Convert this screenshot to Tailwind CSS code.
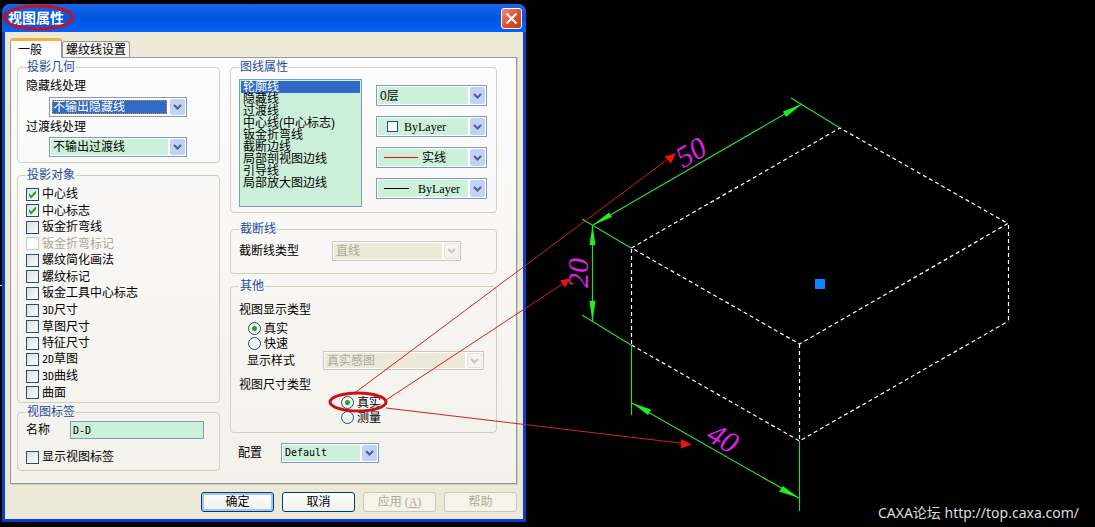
<!DOCTYPE html>
<html lang="zh-CN">
<head>
    <meta charset="UTF-8" />
    <meta name="viewport" content="width=device-width, initial-scale=1.0"/>
    <title>视图属性</title>
    <script src="https://cdn.jsdelivr.net/npm/@tailwindcss/browser@4"></script>
</head>
<body class="relative min-h-screen overflow-hidden bg-black pt-1 pl-[2px] font-['Liberation_Sans','Noto_Sans_CJK_SC',sans-serif] text-[12px] leading-4 text-black">

    <!-- Dialog -->
    <section class="w-[524px] rounded-t-lg border-x-[3px] border-b-[3px] border-[#0640c8] bg-[#ece9d8]">
        <header class="-mx-[3px] flex h-7 items-center justify-between rounded-t-lg bg-linear-to-b from-[#1a66e8] via-[#0054e3] to-[#0560fa] pr-1 pl-[6px]">
            <h1 class="text-[14px] font-bold text-white">视图属性</h1>
            <button type="button" aria-label="关闭" class="flex size-[21px] items-center justify-center rounded-[3px] border border-white bg-linear-to-br from-[#f0907a] via-[#e0502c] to-[#c43c18]">
                <svg viewBox="0 0 13 13" class="size-[13px]" fill="none" stroke="#fff" stroke-width="2.2"><path d="M1.5 1.5l10 10M11.5 1.5l-10 10"/></svg>
            </button>
        </header>

        <div class="pt-[6px] pr-[6px] pb-[7px] pl-[5px]">
            <nav class="flex items-end" role="tablist">
                <button type="button" role="tab" aria-selected="true" class="z-10 -mb-px h-[20px] w-[52px] rounded-t-[3px] border-x border-t-[3px] border-x-[#919b9c] border-t-[#f2b13c] bg-[#fcfcfe] pr-3 leading-4">一般</button>
                <button type="button" role="tab" class="h-4 w-[68px] rounded-t-[3px] border border-b-0 border-[#919b9c] bg-[#f6f5f0] leading-4">螺纹线设置</button>
            </nav>

            <main class="flex items-start gap-[10px] border border-[#919b9c] bg-linear-to-b from-[#fcfcfe] to-[#f3f1ea] pt-[2px] pr-[19px] pb-[12px] pl-[6px] shadow-[1px_1px_0_#d0cebf]">
                <div class="w-[203px]">
                    <fieldset class="rounded-[4px] border border-[#d0d0bf] pt-1 pb-[5px] pl-2">
                        <legend class="px-[1px] leading-[14px] text-[#1c4c9c]">投影几何</legend>
                        <label for="hidden-line" class="block">隐藏线处理</label>
                        <div class="mt-[3px] ml-[23px] flex h-5 w-[138px] items-center border border-[#7f9db9] bg-white p-px">
                            <select id="hidden-line" class="mx-px h-[14px] min-w-0 flex-1 appearance-none border border-dotted border-[#ce953a] bg-[#316ac5] leading-3 text-white"><option>不输出隐藏线</option></select>
                            <span class="ml-[2px] flex h-4 w-[15px] items-center justify-center rounded-[2px] bg-[#c1d1f8]"><svg viewBox="0 0 9 6" class="w-[9px]" fill="none" stroke="#4d6185" stroke-width="2"><path d="M1 1l3.500 3.500L8 1"/></svg></span>
                        </div>
                        <label for="trans-line" class="mt-[2px] block">过渡线处理</label>
                        <div class="mt-[2px] ml-[23px] flex h-5 w-[138px] items-center border border-[#7f9db9] bg-white p-px">
                            <select id="trans-line" class="h-4 min-w-0 flex-1 appearance-none bg-[#cdf0da] pl-[2px] leading-4"><option>不输出过渡线</option></select>
                            <span class="ml-[2px] flex h-4 w-[15px] items-center justify-center rounded-[2px] bg-[#c1d1f8]"><svg viewBox="0 0 9 6" class="w-[9px]" fill="none" stroke="#4d6185" stroke-width="2"><path d="M1 1l3.500 3.500L8 1"/></svg></span>
                        </div>
                    </fieldset>

                    <fieldset class="mt-[5px] rounded-[4px] border border-[#d0d0bf] pt-1 pb-px pl-2">
                        <legend class="px-[1px] leading-[14px] text-[#1c4c9c]">投影对象</legend>
                        <div class="flex h-[215px] flex-col justify-between">
                            <label class="flex h-4 items-center gap-[3px]"><span class="relative size-[13px]"><input type="checkbox" checked class="block size-[13px] appearance-none border border-[#1c5180] bg-linear-to-br from-[#dcdcd7] to-white"/><svg viewBox="0 0 13 13" class="absolute inset-0" fill="#21a121"><path d="M3 5v3l2 2.500 5-5v-3l-5 5z"/></svg></span>中心线</label>
                            <label class="flex h-4 items-center gap-[3px]"><span class="relative size-[13px]"><input type="checkbox" checked class="block size-[13px] appearance-none border border-[#1c5180] bg-linear-to-br from-[#dcdcd7] to-white"/><svg viewBox="0 0 13 13" class="absolute inset-0" fill="#21a121"><path d="M3 5v3l2 2.500 5-5v-3l-5 5z"/></svg></span>中心标志</label>
                            <label class="flex h-4 items-center gap-[3px]"><input type="checkbox" class="size-[13px] appearance-none border border-[#1c5180] bg-linear-to-br from-[#dcdcd7] to-white"/>钣金折弯线</label>
                            <label class="flex h-4 items-center gap-[3px] text-[#aca899]"><input type="checkbox" disabled class="size-[13px] appearance-none border border-[#cac8bb] bg-white"/>钣金折弯标记</label>
                            <label class="flex h-4 items-center gap-[3px]"><input type="checkbox" class="size-[13px] appearance-none border border-[#1c5180] bg-linear-to-br from-[#dcdcd7] to-white"/>螺纹简化画法</label>
                            <label class="flex h-4 items-center gap-[3px]"><input type="checkbox" class="size-[13px] appearance-none border border-[#1c5180] bg-linear-to-br from-[#dcdcd7] to-white"/>螺纹标记</label>
                            <label class="flex h-4 items-center gap-[3px]"><input type="checkbox" class="size-[13px] appearance-none border border-[#1c5180] bg-linear-to-br from-[#dcdcd7] to-white"/>钣金工具中心标志</label>
                            <label class="flex h-4 items-center gap-[3px]"><input type="checkbox" class="size-[13px] appearance-none border border-[#1c5180] bg-linear-to-br from-[#dcdcd7] to-white"/><span><span class="font-['DejaVu_Sans_Mono',monospace] text-[10px]">3D</span>尺寸</span></label>
                            <label class="flex h-4 items-center gap-[3px]"><input type="checkbox" class="size-[13px] appearance-none border border-[#1c5180] bg-linear-to-br from-[#dcdcd7] to-white"/>草图尺寸</label>
                            <label class="flex h-4 items-center gap-[3px]"><input type="checkbox" class="size-[13px] appearance-none border border-[#1c5180] bg-linear-to-br from-[#dcdcd7] to-white"/>特征尺寸</label>
                            <label class="flex h-4 items-center gap-[3px]"><input type="checkbox" class="size-[13px] appearance-none border border-[#1c5180] bg-linear-to-br from-[#dcdcd7] to-white"/><span><span class="font-['DejaVu_Sans_Mono',monospace] text-[10px]">2D</span>草图</span></label>
                            <label class="flex h-4 items-center gap-[3px]"><input type="checkbox" class="size-[13px] appearance-none border border-[#1c5180] bg-linear-to-br from-[#dcdcd7] to-white"/><span><span class="font-['DejaVu_Sans_Mono',monospace] text-[10px]">3D</span>曲线</span></label>
                            <label class="flex h-4 items-center gap-[3px]"><input type="checkbox" class="size-[13px] appearance-none border border-[#1c5180] bg-linear-to-br from-[#dcdcd7] to-white"/>曲面</label>
                        </div>
                    </fieldset>

                    <fieldset class="mt-[2px] rounded-[4px] border border-[#d0d0bf] pt-[2px] pb-[5px] pl-2">
                        <legend class="px-[1px] leading-[14px] text-[#1c4c9c]">视图标签</legend>
                        <div class="flex items-center">
                            <label for="view-name" class="w-11">名称</label>
                            <input id="view-name" type="text" value="D-D" class="h-[18px] w-[134px] border border-[#7f9db9] bg-[#cdf0da] px-[2px] font-['DejaVu_Sans_Mono',monospace] text-[10px]"/>
                        </div>
                        <label class="mt-[10px] flex h-4 items-center gap-[3px]"><input type="checkbox" class="size-[13px] appearance-none border border-[#1c5180] bg-linear-to-br from-[#dcdcd7] to-white"/>显示视图标签</label>
                    </fieldset>
                </div>

                <div class="flex-1">
                    <fieldset class="rounded-[4px] border border-[#d0d0bf] pt-[5px] pb-[5px] pl-2">
                        <legend class="px-[1px] leading-[14px] text-[#1c4c9c]">图线属性</legend>
                        <div class="flex items-start gap-[14px]">
                            <select size="9" aria-label="图线属性" class="h-32 w-[123px] overflow-hidden border border-[#7f9db9] bg-[#cdf0da] p-px">
                                <option selected class="flex h-3 min-h-0 items-center p-0 pb-[3px] pl-[2px] text-white checked:bg-[linear-gradient(#316ac5,#316ac5)]">轮廓线</option>
                                <option class="flex h-3 min-h-0 items-center p-0 pb-[3px] pl-[2px]">隐藏线</option>
                                <option class="flex h-3 min-h-0 items-center p-0 pb-[3px] pl-[2px]">过渡线</option>
                                <option class="flex h-3 min-h-0 items-center p-0 pb-[3px] pl-[2px]">中心线(中心标志)</option>
                                <option class="flex h-3 min-h-0 items-center p-0 pb-[3px] pl-[2px]">钣金折弯线</option>
                                <option class="flex h-3 min-h-0 items-center p-0 pb-[3px] pl-[2px]">截断边线</option>
                                <option class="flex h-3 min-h-0 items-center p-0 pb-[3px] pl-[2px]">局部剖视图边线</option>
                                <option class="flex h-3 min-h-0 items-center p-0 pb-[3px] pl-[2px]">引导线</option>
                                <option class="flex h-3 min-h-0 items-center p-0 pb-[3px] pl-[2px]">局部放大图边线</option>
                            </select>
                            <div class="flex w-[111px] flex-col gap-[10px] pt-[6px]">
                                <div class="flex h-[21px] items-center border border-[#7f9db9] bg-white p-px">
                                    <select aria-label="图层" class="h-full min-w-0 flex-1 appearance-none bg-[#cdf0da] pl-[2px] leading-4"><option>0层</option></select>
                                    <span class="ml-[2px] flex h-full w-[15px] items-center justify-center rounded-[2px] bg-[#c1d1f8]"><svg viewBox="0 0 9 6" class="w-[9px]" fill="none" stroke="#4d6185" stroke-width="2"><path d="M1 1l3.500 3.500L8 1"/></svg></span>
                                </div>
                                <div class="flex h-[21px] items-center border border-[#7f9db9] bg-white p-px">
                                    <span class="flex h-full w-[26px] items-center bg-[#cdf0da] pl-[9px]"><span class="size-[11px] border border-[#1c5180] bg-white"></span></span>
                                    <select aria-label="颜色" class="h-full min-w-0 flex-1 appearance-none bg-[#cdf0da] font-['Liberation_Serif',serif] leading-4"><option>ByLayer</option></select>
                                    <span class="ml-[2px] flex h-full w-[15px] items-center justify-center rounded-[2px] bg-[#c1d1f8]"><svg viewBox="0 0 9 6" class="w-[9px]" fill="none" stroke="#4d6185" stroke-width="2"><path d="M1 1l3.500 3.500L8 1"/></svg></span>
                                </div>
                                <div class="flex h-[21px] items-center border border-[#7f9db9] bg-white p-px">
                                    <span class="flex h-full w-11 items-center bg-[#cdf0da] pl-[6px]"><span class="h-px w-[34px] bg-[#ff0000]"></span></span>
                                    <select aria-label="线型" class="h-full min-w-0 flex-1 appearance-none bg-[#cdf0da] leading-4"><option>实线</option></select>
                                    <span class="ml-[2px] flex h-full w-[15px] items-center justify-center rounded-[2px] bg-[#c1d1f8]"><svg viewBox="0 0 9 6" class="w-[9px]" fill="none" stroke="#4d6185" stroke-width="2"><path d="M1 1l3.500 3.500L8 1"/></svg></span>
                                </div>
                                <div class="flex h-[21px] items-center border border-[#7f9db9] bg-white p-px">
                                    <span class="flex h-full w-10 items-center bg-[#cdf0da] pl-[6px]"><span class="h-px w-[25px] bg-black"></span></span>
                                    <select aria-label="线宽" class="h-full min-w-0 flex-1 appearance-none bg-[#cdf0da] font-['Liberation_Serif',serif] leading-4"><option>ByLayer</option></select>
                                    <span class="ml-[2px] flex h-full w-[15px] items-center justify-center rounded-[2px] bg-[#c1d1f8]"><svg viewBox="0 0 9 6" class="w-[9px]" fill="none" stroke="#4d6185" stroke-width="2"><path d="M1 1l3.500 3.500L8 1"/></svg></span>
                                </div>
                            </div>
                        </div>
                    </fieldset>

                    <fieldset class="mt-[9px] rounded-[4px] border border-[#d0d0bf] pt-[5px] pb-3 pl-2">
                        <legend class="px-[1px] leading-[14px] text-[#1c4c9c]">截断线</legend>
                        <div class="flex items-center">
                            <label for="break-type" class="w-[93px]">截断线类型</label>
                            <div class="flex h-5 w-[129px] items-center border border-[#c9c7ba] bg-white p-px">
                                <select id="break-type" disabled class="h-full min-w-0 flex-1 appearance-none bg-[#ece9d8] pl-[2px] leading-4 text-[#aca899] opacity-100"><option>直线</option></select>
                                <span class="ml-[2px] flex h-full w-[15px] items-center justify-center rounded-[2px] border border-[#e3e1d5] bg-[#f5f4ee]"><svg viewBox="0 0 9 6" class="w-[9px]" fill="none" stroke="#c9c7ba" stroke-width="2"><path d="M1 1l3.500 3.500L8 1"/></svg></span>
                            </div>
                        </div>
                    </fieldset>

                    <fieldset class="mt-[5px] rounded-[4px] border border-[#d0d0bf] pt-[9px] pb-[7px] pl-2">
                        <legend class="px-[1px] leading-[14px] text-[#1c4c9c]">其他</legend>
                        <p>视图显示类型</p>
                        <div class="mt-[3px] ml-[9px]">
                            <label class="flex h-[15px] items-center gap-[3px]"><input type="radio" name="display" checked class="size-[13px] appearance-none rounded-full border border-[#1c5180] bg-[#f4f4f0] checked:bg-[radial-gradient(circle,#21a121_25%,#f4f4f0_40%)]"/>真实</label>
                            <label class="flex h-[15px] items-center gap-[3px]"><input type="radio" name="display" class="size-[13px] appearance-none rounded-full border border-[#1c5180] bg-[#f4f4f0]"/>快速</label>
                        </div>
                        <div class="ml-2 flex items-center">
                            <label for="display-style" class="w-[76px]">显示样式</label>
                            <div class="flex h-[19px] w-[161px] items-center border border-[#c9c7ba] bg-white p-px">
                                <select id="display-style" disabled class="h-full min-w-0 flex-1 appearance-none bg-[#ece9d8] pl-[2px] leading-4 text-[#aca899] opacity-100"><option>真实感图</option></select>
                                <span class="ml-[2px] flex h-full w-[15px] items-center justify-center rounded-[2px] border border-[#e3e1d5] bg-[#f5f4ee]"><svg viewBox="0 0 9 6" class="w-[9px]" fill="none" stroke="#c9c7ba" stroke-width="2"><path d="M1 1l3.500 3.500L8 1"/></svg></span>
                            </div>
                        </div>
                        <p class="mt-[7px]">视图尺寸类型</p>
                        <div class="mt-[2px] ml-[102px]">
                            <label class="flex h-[15px] items-center gap-[3px]"><input type="radio" name="dimension" checked class="size-[13px] appearance-none rounded-full border border-[#1c5180] bg-[#f4f4f0] checked:bg-[radial-gradient(circle,#21a121_25%,#f4f4f0_40%)]"/>真实</label>
                            <label class="flex h-[15px] items-center gap-[3px]"><input type="radio" name="dimension" class="size-[13px] appearance-none rounded-full border border-[#1c5180] bg-[#f4f4f0]"/>测量</label>
                        </div>
                    </fieldset>

                    <div class="mt-[10px] ml-2 flex items-center">
                        <label for="config" class="w-[43px]">配置</label>
                        <div class="flex h-5 w-[98px] items-center border border-[#7f9db9] bg-white p-px">
                            <select id="config" class="h-full min-w-0 flex-1 appearance-none bg-[#cdf0da] pl-[2px] font-['DejaVu_Sans_Mono',monospace] text-[10px] leading-4"><option>Default</option></select>
                            <span class="ml-[2px] flex h-full w-[15px] items-center justify-center rounded-[2px] bg-[#c1d1f8]"><svg viewBox="0 0 9 6" class="w-[9px]" fill="none" stroke="#4d6185" stroke-width="2"><path d="M1 1l3.500 3.500L8 1"/></svg></span>
                        </div>
                    </div>
                </div>
            </main>

            <footer class="mt-2 flex justify-end gap-2">
                <button type="button" class="h-5 w-[73px] rounded-[3px] border border-[#003c74] bg-linear-to-b from-white to-[#f0efe8] leading-4 shadow-[inset_0_0_0_2px_#a8c4f0]">确定</button>
                <button type="button" class="h-5 w-[73px] rounded-[3px] border border-[#003c74] bg-linear-to-b from-white to-[#f0efe8] leading-4">取消</button>
                <button type="button" disabled class="h-5 w-[73px] rounded-[3px] border border-[#c9c7ba] bg-[#f5f4ea] leading-4 text-[#aca899]">应用<span class="font-['Liberation_Serif',serif]"> (<u>A</u>)</span></button>
                <button type="button" disabled class="h-5 w-[73px] rounded-[3px] border border-[#c9c7ba] bg-[#f5f4ea] leading-4 text-[#aca899]">帮助</button>
            </footer>
        </div>
    </section>

    <!-- Drawing canvas and annotations -->
    <svg class="pointer-events-none absolute top-0 left-0 z-20" width="1095" height="527" viewBox="0 0 1095 527" fill="none">
        <path d="M0 285.500h2" stroke="#fff"/>
        <!-- box edges -->
        <g stroke="#fff" stroke-width="1.200" stroke-dasharray="4 3">
            <path d="M631.500 248L840 128L1008 223.500L799.500 344Z"/>
            <path d="M631.500 345L799.500 441L1008.500 321"/>
            <path d="M631.500 249V345M799.500 344V441M1008.500 225V321"/>
        </g>
        <!-- dimension lines -->
        <g stroke="#2fd82f" stroke-width="1.200">
            <path d="M791 98L840 128M582 219L631 248M582 315L631 345"/>
            <path d="M593 225L802 104M592.500 225V322M632 403L799 498"/>
            <path d="M631.500 345V415M799.500 441V511"/>
        </g>
        <g fill="#1fee1f">
            <path d="M593 225L609 212.500L612 217Z"/>
            <path d="M802 104L783 111.500L786 117Z"/>
            <path d="M592.500 225L589.500 245H595.500Z"/>
            <path d="M592.500 322L589.500 301H595.500Z"/>
            <path d="M632 403L651 409.500L648 415Z"/>
            <path d="M799 498L783 486L779 491.500Z"/>
        </g>
        <g class="font-['Liberation_Serif',serif] text-[30px] italic" fill="#e020e8" text-anchor="middle">
            <text transform="translate(696 161) rotate(-30)">50</text>
            <text transform="translate(588 273) rotate(-90)">20</text>
            <text transform="translate(718 447) rotate(30)">40</text>
        </g>
        <rect x="815" y="279" width="10" height="10" fill="#0a84ff"/>
        <!-- red callouts -->
        <path d="M356 392L668 159M386 400L564 283M386 408L684 443.500" stroke="#d0202a"/>
        <path d="M676 153L664.500 156.500L671 163.500ZM571 278L560 280.500L565 287.500ZM692 444.500L681 439V448.500Z" fill="#f01010"/>
        <g stroke="#cc1018" stroke-width="3">
            <ellipse cx="38.500" cy="17.500" rx="34" ry="11.500"/>
            <ellipse cx="358" cy="402" rx="28" ry="9"/>
        </g>
    </svg>

    <a href="http://top.caxa.com/" class="absolute right-4 bottom-1 font-['Noto_Sans','Noto_Sans_CJK_SC',sans-serif] text-[14px] leading-5 text-[#dcdcdc]">CAXA论坛 http://top.caxa.com/</a>
</body>
</html>
